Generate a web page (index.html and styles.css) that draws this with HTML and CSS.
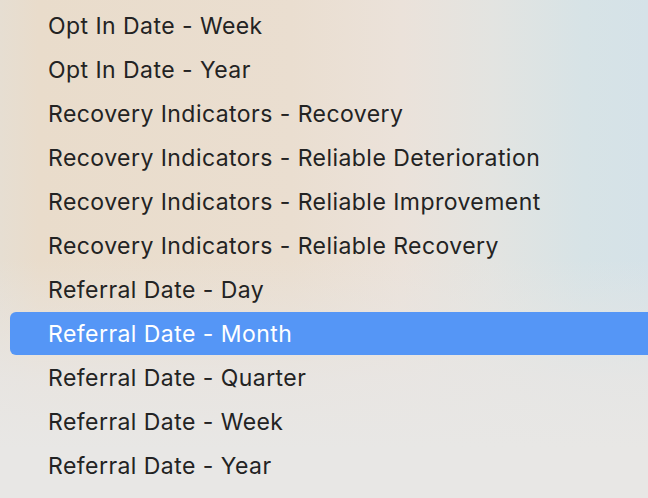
FILE: index.html
```html
<!DOCTYPE html>
<html>
<head>
<meta charset="utf-8">
<link rel="stylesheet" href="styles.css">
</head>
<body>
<ul class="menu">
  <li class="item">Opt In Date - Week</li>
  <li class="item">Opt In Date - Year</li>
  <li class="item">Recovery Indicators - Recovery</li>
  <li class="item">Recovery Indicators - Reliable Deterioration</li>
  <li class="item">Recovery Indicators - Reliable Improvement</li>
  <li class="item">Recovery Indicators - Reliable Recovery</li>
  <li class="item">Referral Date - Day</li>
  <li class="item selected">Referral Date - Month</li>
  <li class="item">Referral Date - Quarter</li>
  <li class="item">Referral Date - Week</li>
  <li class="item">Referral Date - Year</li>
</ul>
</body>
</html>
```
FILE: styles.css
```css
html, body {
  margin: 0;
  padding: 0;
  width: 648px;
  height: 498px;
  overflow: hidden;
}
body {
  font-family: Inter, "Noto Sans", sans-serif;
  background:
    linear-gradient(180deg, rgba(232,230,228,0) 0%, rgba(232,230,228,0) 52%, rgba(232,230,228,0.85) 76%, #e8e7e5 90%, #e8e7e5 100%),
    linear-gradient(90deg, #e6ded2 0%, #e9dccb 6%, #eaded0 45%, #ebe2da 62%, #e3e4e1 76%, #d7e3e6 90%, #d5e2e8 100%);
}
.menu {
  list-style: none;
  margin: 0;
  padding: 4px 0 0 10px;
  display: flex;
  flex-direction: column;
}
.item {
  height: 44px;
  display: flex;
  align-items: center;
  padding-left: 38px;
  font-size: 23px;
  letter-spacing: 0.45px;
  color: #232323;
  border-radius: 6px 0 0 6px;
}
.item.selected {
  height: 43px;
  margin-bottom: 1px;
  background: #5596f6;
  color: #ffffff;
}
```
